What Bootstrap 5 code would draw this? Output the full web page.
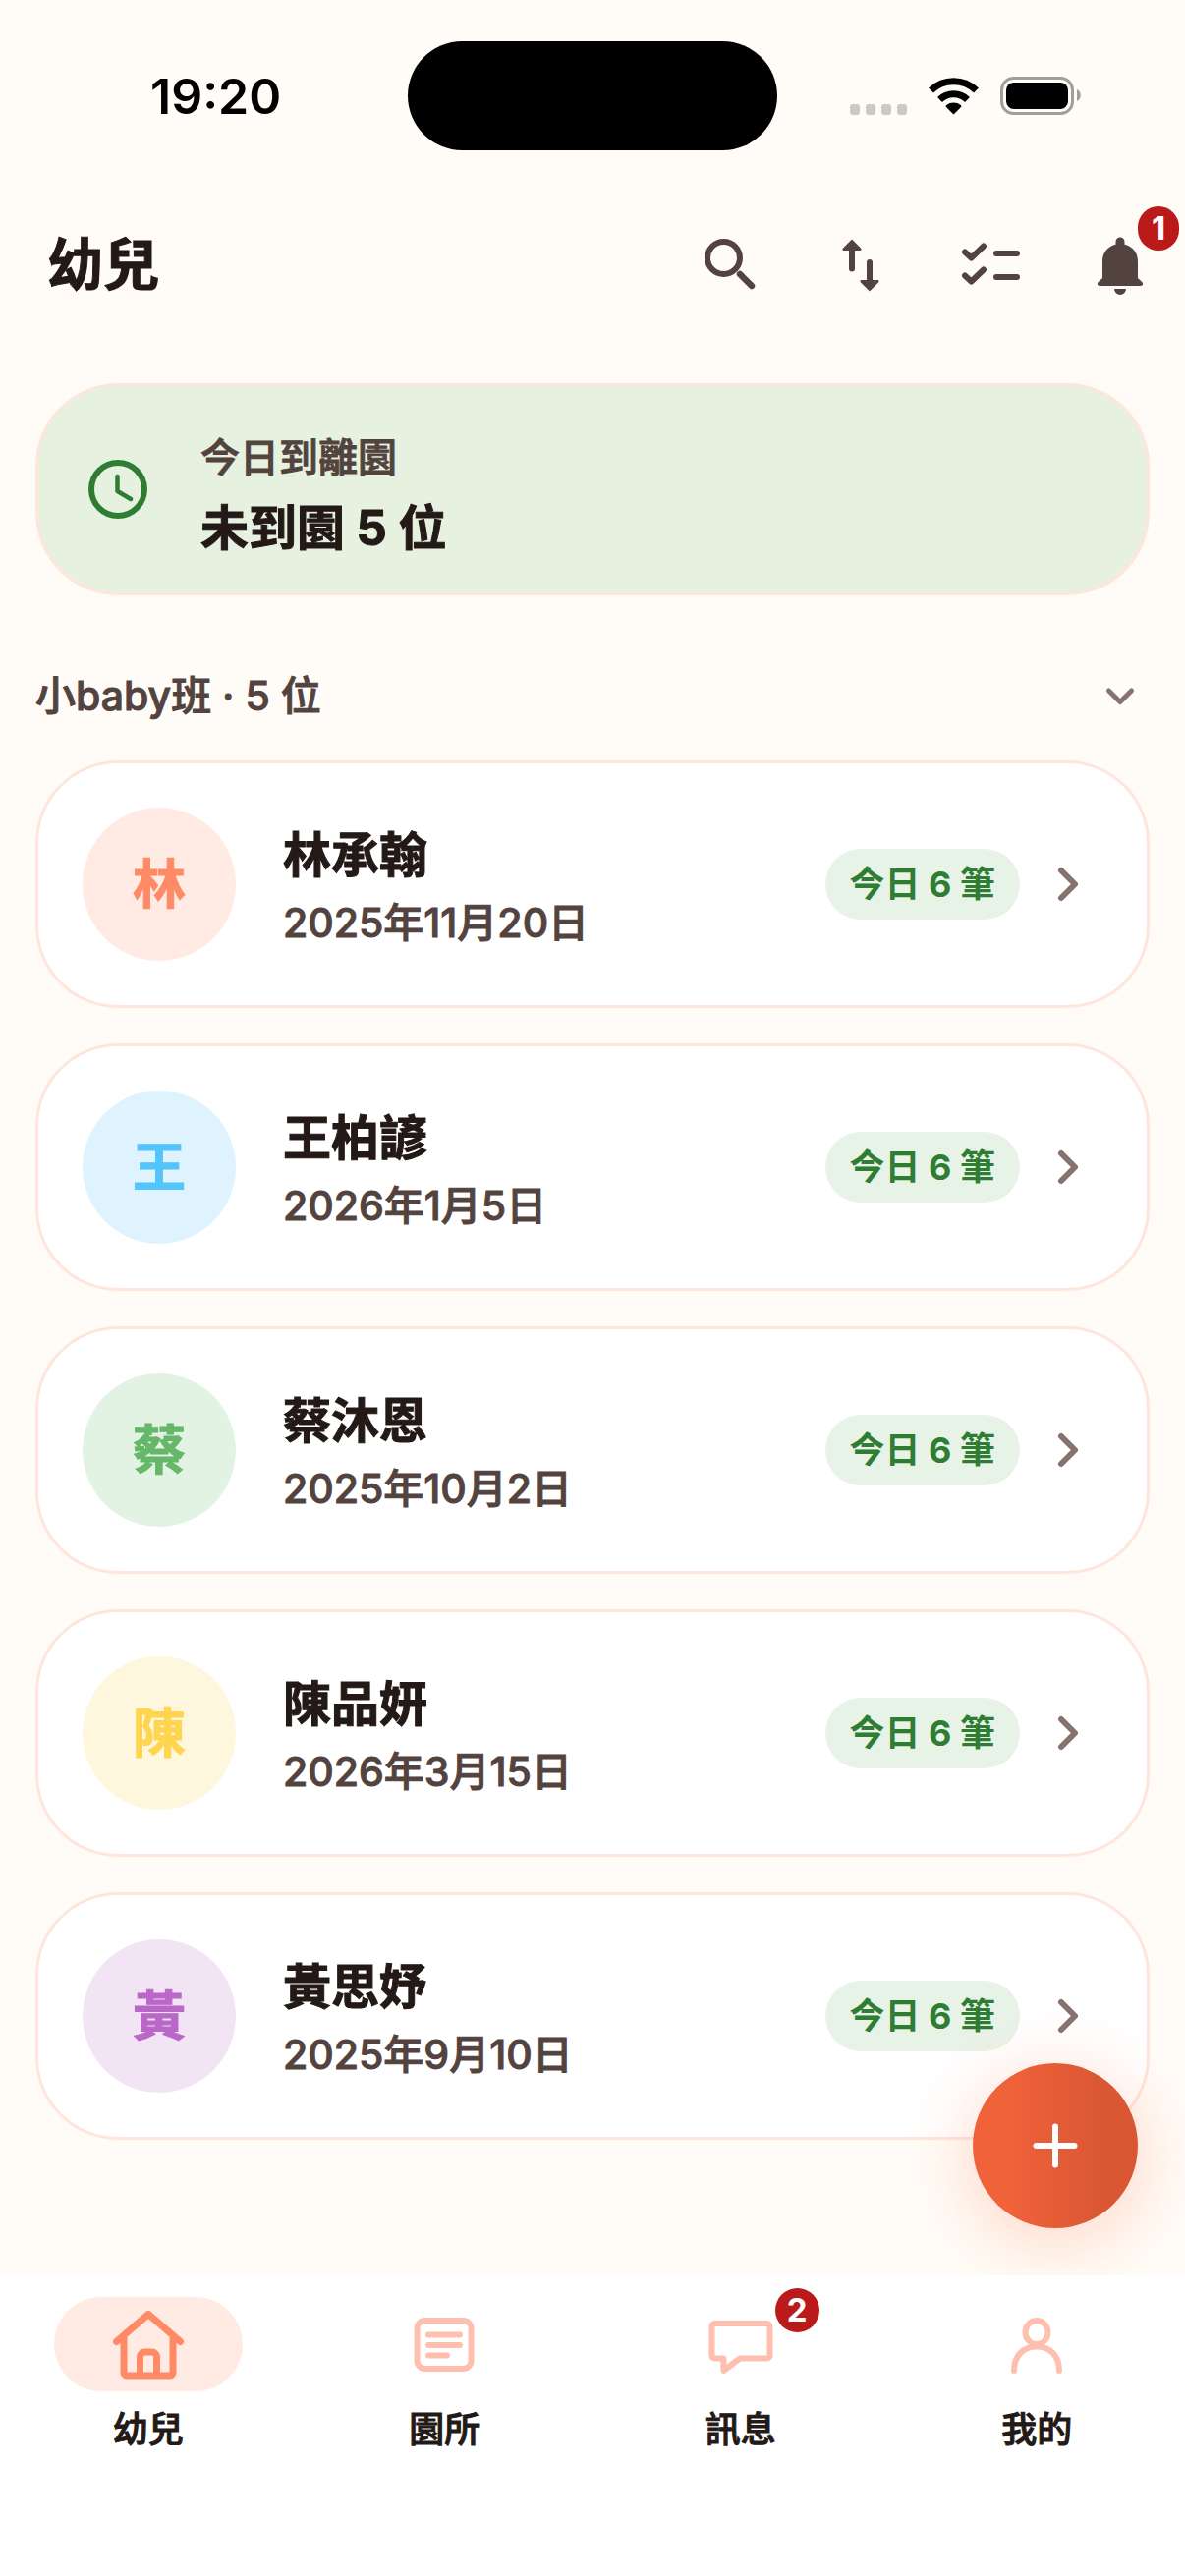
<!DOCTYPE html>
<html lang="zh-Hant">
<head>
<meta charset="utf-8">
<meta name="viewport" content="width=device-width, initial-scale=1">
<title>幼兒</title>
<link rel="stylesheet" href="https://cdn.jsdelivr.net/npm/bootstrap@5.3.0/dist/css/bootstrap.min.css">
<style>
  :root { --ink: #231917; --muted-ink: #53433f; --hint: #857370; --line: #ffe6dc; --green: #2e7d32; --coral: #ff8a65; --alert: #ba1a1a; }
  body { background: #fffcf7; color: var(--ink); font-family: Inter, "Noto Sans CJK TC", sans-serif; font-size: 40px; line-height: 60px; }
  svg { display: block; flex: none; }
  .status-bar { height: 186px; padding: 42px 105px 0; }
  .status-side { flex: 1 1 0; height: 111px; }
  .status-time { font-size: 50px; font-weight: 600; color: #000; margin-left: 48px; }
  .island { width: 376px; height: 111px; border-radius: 56px; background: #000; }
  .top-bar { height: 168px; padding: 0 0 0 48px; }
  .top-title { font-size: 57px; font-weight: 700; line-height: 72px; }
  .top-title, .strong-line, .avatar, .summary-label, .birthday, .group-head, .tab { -webkit-text-stroke: 1px currentColor; }
  .tool-btn { width: 132px; height: 144px; color: var(--muted-ink); }
  .count-dot { background: var(--alert); color: #fff; font-size: 33px; font-weight: 700; line-height: 45px; height: 45px; min-width: 45px; border-radius: 24px; text-align: center; -webkit-text-stroke: 0; }
  .bell-count { left: 84px; top: 12px; min-width: 42px; }
  .page-main { padding: 36px 36px 138px; }
  .panel { border: 3px solid var(--line); border-radius: 84px; }
  .summary { background: #e6f1e0; height: 216px; padding: 0 45px 0 51px; gap: 54px; color: var(--green); }
  .summary-text { gap: 6px; padding-top: 14px; }
  .summary-label { color: var(--muted-ink); font-weight: 500; }
  .strong-line { color: var(--ink); font-size: 49px; font-weight: 700; line-height: 72px; }
  .group-head { height: 168px; font-size: 41px; font-weight: 500; color: var(--muted-ink); padding-top: 36px; }
  .group-head button { color: var(--hint); width: 60px; height: 60px; }
  .child-list { gap: 36px; }
  .child { background: #fff; height: 252px; padding: 0 45px; color: var(--ink); }
  .child-text { padding-top: 4px; gap: 2px; }
  .avatar { width: 156px; height: 156px; font-size: 54px; font-weight: 700; margin-right: 48px; padding-top: 2px; }
  .tone-coral { background: #ffebe4; color: #ff8a65; }
  .tone-blue { background: #dff3ff; color: #53c5fa; }
  .tone-green { background: #e2f3e3; color: #66b76a; }
  .tone-yellow { background: #fff6de; color: #ffd54f; }
  .tone-purple { background: #f2e4f5; color: #ba68c8; }
  .birthday { color: var(--muted-ink); font-size: 41px; font-weight: 500; }
  .tally { background: #e8f3e8; color: var(--green); font-size: 36px; font-weight: 700; line-height: 72px; padding: 0 25px; margin-right: 12px; }
  .chev { color: var(--hint); }
  .fab { right: 48px; bottom: 48px; width: 168px; height: 168px; background: linear-gradient(90deg, #f0623a 20%, #da5734 80%); color: #fff; box-shadow: 0 12px 72px rgba(255, 112, 67, .3); }
  .fab:hover { background: #da5734; color: #fff; }
  .tab-bar { background: #fff; height: 306px; padding-top: 22px; z-index: 2; }
  .tab { color: var(--ink); font-size: 36px; font-weight: 500; line-height: 54px; }
  .tab-icon { width: 192px; height: 96px; border-radius: 48px; color: #ffbfae; margin-bottom: 12px; }
  .tab.active .tab-icon { background: #ffebe4; color: var(--coral); }
  .tab-count { left: 131px; top: -9px; }
</style>
</head>
<body class="d-flex flex-column min-vh-100">

<div class="status-bar d-flex">
  <div class="status-side d-flex align-items-center"><span class="status-time">19:20</span></div>
  <div class="island"></div>
  <div class="status-side d-flex align-items-center justify-content-end">
    <svg width="236" height="44" viewBox="0 0 236 44" aria-hidden="true">
      <g fill="#c9cac6"><rect x="0" y="30" width="10" height="11" rx="3"/><rect x="16" y="30" width="10" height="11" rx="3"/><rect x="32" y="30" width="10" height="11" rx="3"/><rect x="48" y="30" width="10" height="11" rx="3"/></g>
      <g transform="translate(80 3)">
        <path fill="none" stroke="#000" stroke-width="7" d="M2.500 13a33 33 0 0 1 46 0M11.500 22.500a20 20 0 0 1 28 0"/>
        <path d="M25.500 37.500l-7.500-7.500c-.6-.6-.5-1.400.200-1.900a12 12 0 0 1 14.600 0c.7.500.8 1.300.200 1.900z"/>
      </g>
      <rect x="154.500" y="3.500" width="72" height="36" rx="12" fill="none" stroke="#a19f9c" stroke-width="3"/>
      <rect x="159" y="8" width="63" height="27" rx="8"/>
      <path d="M231 15v12c5-1.500 5-10.500 0-12z" fill="#a19f9c"/>
    </svg>
  </div>
</div>

<header class="top-bar d-flex align-items-center">
  <h1 class="top-title mb-0 me-auto">幼兒</h1>
  <button class="tool-btn btn border-0 p-0 d-flex align-items-center justify-content-center" aria-label="搜尋">
    <svg width="72" height="72" viewBox="0 0 72 72" fill="none" stroke="currentColor" stroke-width="6" stroke-linecap="round"><circle cx="28.500" cy="28.500" r="16.500"/><path d="M45 45l12 12" stroke-width="6.500"/></svg>
  </button>
  <button class="tool-btn btn border-0 p-0 d-flex align-items-center justify-content-center" aria-label="排序">
    <svg width="72" height="72" viewBox="0 0 72 72" fill="currentColor"><path d="M27 9.500l9 9c1 1.200.5 2.500-1 2.500h-5v18.500a3 3 0 0 1-6 0V21h-5c-1.500 0-2-1.300-1-2.500zM45 62.500l-9-9c-1-1.200-.5-2.500 1-2.500h5V33a3 3 0 0 1 6 0v18h5c1.500 0 2 1.300 1 2.500z"/></svg>
  </button>
  <button class="tool-btn btn border-0 p-0 d-flex align-items-center justify-content-center" aria-label="批次選取">
    <svg width="72" height="72" viewBox="0 0 72 72" fill="none" stroke="currentColor" stroke-width="6" stroke-linecap="round" stroke-linejoin="round"><path d="M10 22.500l6.500 6L29 16.500M10 46.500l6.500 6L29 40.500M42 24h21M42 48h21"/></svg>
  </button>
  <button class="tool-btn btn border-0 p-0 d-flex align-items-center justify-content-center position-relative" aria-label="通知">
    <svg width="72" height="72" viewBox="0 0 72 72" fill="currentColor"><path d="M36 7.500a4.500 4.500 0 0 0-4.500 4.500v2.700C23.500 16.500 18 23 18 32v17l-4.200 4c-1.800 2-1 4 1.500 4h41.400c2.500 0 3.300-2 1.500-4L54 49V32c0-9-5.500-15.500-13.500-17.300V12A4.500 4.500 0 0 0 36 7.500zM30 60h12a6 6 0 0 1-12 0z"/></svg>
    <span class="count-dot bell-count position-absolute">1</span>
  </button>
</header>

<main class="page-main flex-grow-1 position-relative">
  <section class="panel summary d-flex align-items-center">
    <svg width="60" height="60" viewBox="0 0 60 60" fill="none" stroke="currentColor" stroke-width="6" stroke-linecap="round" stroke-linejoin="round"><circle cx="30" cy="30" r="27"/><path stroke-width="4.500" d="M29.500 17v15L43 40"/></svg>
    <div class="summary-text d-flex flex-column">
      <div class="summary-label">今日到離園</div>
      <div class="strong-line">未到園 5 位</div>
    </div>
  </section>

  <div class="group-head d-flex align-items-center justify-content-between">
    <span>小baby班 · 5 位</span>
    <button class="btn border-0 p-0 d-flex align-items-center justify-content-center" aria-label="收合">
      <svg width="36" height="36" viewBox="0 0 36 36" fill="none" stroke="currentColor" stroke-width="5" stroke-linecap="round" stroke-linejoin="round"><path d="M6.500 13L18 24.500 29.500 13"/></svg>
    </button>
  </div>

  <div class="child-list d-flex flex-column">
    <a href="#" class="panel child d-flex align-items-center text-decoration-none">
      <span class="avatar tone-coral rounded-circle d-flex align-items-center justify-content-center">林</span>
      <span class="child-text d-flex flex-column me-auto"><span class="strong-line">林承翰</span><span class="birthday">2025年11月20日</span></span>
      <span class="tally rounded-pill">今日 6 筆</span>
      <svg class="chev" width="72" height="72" viewBox="0 0 72 72" fill="none" stroke="currentColor" stroke-width="6" stroke-linecap="round" stroke-linejoin="round"><path d="M30 22l14 14-14 14"/></svg>
    </a>
    <a href="#" class="panel child d-flex align-items-center text-decoration-none">
      <span class="avatar tone-blue rounded-circle d-flex align-items-center justify-content-center">王</span>
      <span class="child-text d-flex flex-column me-auto"><span class="strong-line">王柏諺</span><span class="birthday">2026年1月5日</span></span>
      <span class="tally rounded-pill">今日 6 筆</span>
      <svg class="chev" width="72" height="72" viewBox="0 0 72 72" fill="none" stroke="currentColor" stroke-width="6" stroke-linecap="round" stroke-linejoin="round"><path d="M30 22l14 14-14 14"/></svg>
    </a>
    <a href="#" class="panel child d-flex align-items-center text-decoration-none">
      <span class="avatar tone-green rounded-circle d-flex align-items-center justify-content-center">蔡</span>
      <span class="child-text d-flex flex-column me-auto"><span class="strong-line">蔡沐恩</span><span class="birthday">2025年10月2日</span></span>
      <span class="tally rounded-pill">今日 6 筆</span>
      <svg class="chev" width="72" height="72" viewBox="0 0 72 72" fill="none" stroke="currentColor" stroke-width="6" stroke-linecap="round" stroke-linejoin="round"><path d="M30 22l14 14-14 14"/></svg>
    </a>
    <a href="#" class="panel child d-flex align-items-center text-decoration-none">
      <span class="avatar tone-yellow rounded-circle d-flex align-items-center justify-content-center">陳</span>
      <span class="child-text d-flex flex-column me-auto"><span class="strong-line">陳品妍</span><span class="birthday">2026年3月15日</span></span>
      <span class="tally rounded-pill">今日 6 筆</span>
      <svg class="chev" width="72" height="72" viewBox="0 0 72 72" fill="none" stroke="currentColor" stroke-width="6" stroke-linecap="round" stroke-linejoin="round"><path d="M30 22l14 14-14 14"/></svg>
    </a>
    <a href="#" class="panel child d-flex align-items-center text-decoration-none">
      <span class="avatar tone-purple rounded-circle d-flex align-items-center justify-content-center">黃</span>
      <span class="child-text d-flex flex-column me-auto"><span class="strong-line">黃思妤</span><span class="birthday">2025年9月10日</span></span>
      <span class="tally rounded-pill">今日 6 筆</span>
      <svg class="chev" width="72" height="72" viewBox="0 0 72 72" fill="none" stroke="currentColor" stroke-width="6" stroke-linecap="round" stroke-linejoin="round"><path d="M30 22l14 14-14 14"/></svg>
    </a>
  </div>

  <button class="fab btn border-0 p-0 rounded-circle position-absolute d-flex align-items-center justify-content-center" aria-label="新增">
    <svg width="72" height="72" viewBox="0 0 72 72" fill="none" stroke="currentColor" stroke-width="6" stroke-linecap="round"><path d="M16.500 36h39M36 16.500v39"/></svg>
  </button>
</main>

<nav class="tab-bar position-relative">
  <div class="row g-0 text-center">
    <a href="#" class="tab active col d-flex flex-column align-items-center text-decoration-none" aria-current="page">
      <span class="tab-icon d-flex align-items-center justify-content-center">
        <svg width="84" height="84" viewBox="0 0 84 84" fill="none" stroke="currentColor" stroke-width="7" stroke-linecap="round" stroke-linejoin="round"><path d="M9.500 39.500L42 11.500l32.500 28M17 35v36a3 3 0 0 0 3 3h44a3 3 0 0 0 3-3V35M33.500 73V55a5 5 0 0 1 5-5h7a5 5 0 0 1 5 5v18"/></svg>
      </span>
      <span>幼兒</span>
    </a>
    <a href="#" class="tab col d-flex flex-column align-items-center text-decoration-none">
      <span class="tab-icon d-flex align-items-center justify-content-center">
        <svg width="72" height="72" viewBox="0 0 72 72" fill="none" stroke="currentColor" stroke-width="6" stroke-linecap="round"><rect x="8.500" y="12" width="55" height="49" rx="8"/><path d="M20 26.500h32M20 37h32M20 47.500h19"/></svg>
      </span>
      <span>園所</span>
    </a>
    <a href="#" class="tab col d-flex flex-column align-items-center text-decoration-none">
      <span class="tab-icon d-flex align-items-center justify-content-center position-relative">
        <svg width="72" height="72" viewBox="0 0 72 72" fill="none" stroke="currentColor" stroke-width="6" stroke-linecap="round" stroke-linejoin="round"><path d="M9.500 15h53a3 3 0 0 1 3 3v29.500a3 3 0 0 1-3 3H35L18.500 63V50.500h-9a3 3 0 0 1-3-3V18a3 3 0 0 1 3-3z"/></svg>
        <span class="count-dot tab-count position-absolute">2</span>
      </span>
      <span>訊息</span>
    </a>
    <a href="#" class="tab col d-flex flex-column align-items-center text-decoration-none">
      <span class="tab-icon d-flex align-items-center justify-content-center">
        <svg width="72" height="72" viewBox="0 0 72 72" fill="none" stroke="currentColor" stroke-width="6" stroke-linecap="round"><ellipse cx="36" cy="24" rx="11.500" ry="12"/><path d="M13 63c0-15 9-24.500 23-24.500S59 48 59 63"/></svg>
      </span>
      <span>我的</span>
    </a>
  </div>
</nav>

<script src="https://cdn.jsdelivr.net/npm/bootstrap@5.3.0/dist/js/bootstrap.bundle.min.js"></script>
</body>
</html>
